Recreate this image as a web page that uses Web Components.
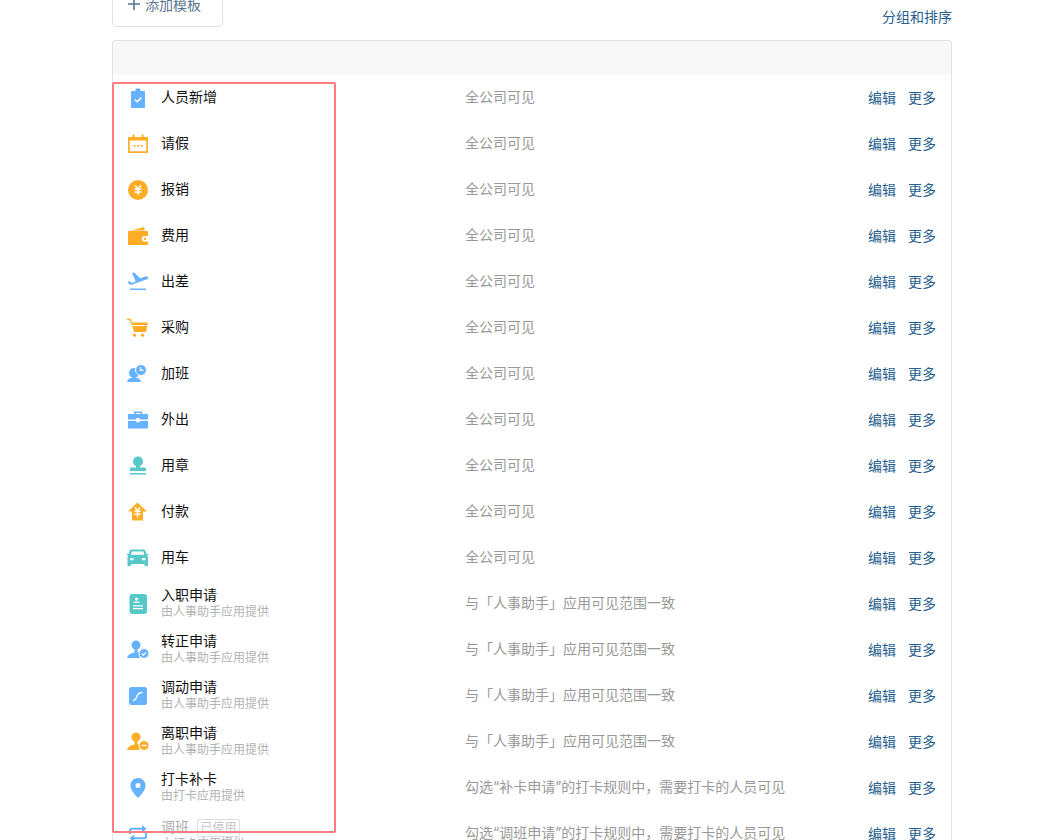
<!DOCTYPE html>
<html lang="zh">
<head>
<meta charset="utf-8">
<title>模板管理</title>
<style>
  html, body {
    margin: 0;
    height: 840px;
    overflow: hidden;
    background: #fff;
    font-family: Inter, "Noto Sans CJK SC", sans-serif;
    font-size: 14px;
  }
</style>
</head>
<body>
<template-page>
  <template-row name="人员新增" scope="全公司可见" icon="clipboard"></template-row>
  <template-row name="请假" scope="全公司可见" icon="calendar"></template-row>
  <template-row name="报销" scope="全公司可见" icon="coin"></template-row>
  <template-row name="费用" scope="全公司可见" icon="wallet"></template-row>
  <template-row name="出差" scope="全公司可见" icon="plane"></template-row>
  <template-row name="采购" scope="全公司可见" icon="cart"></template-row>
  <template-row name="加班" scope="全公司可见" icon="overtime"></template-row>
  <template-row name="外出" scope="全公司可见" icon="case"></template-row>
  <template-row name="用章" scope="全公司可见" icon="stamp"></template-row>
  <template-row name="付款" scope="全公司可见" icon="house"></template-row>
  <template-row name="用车" scope="全公司可见" icon="car"></template-row>
  <template-row name="入职申请" sub="由人事助手应用提供" scope="与「人事助手」应用可见范围一致" icon="idcard"></template-row>
  <template-row name="转正申请" sub="由人事助手应用提供" scope="与「人事助手」应用可见范围一致" icon="usercheck"></template-row>
  <template-row name="调动申请" sub="由人事助手应用提供" scope="与「人事助手」应用可见范围一致" icon="transfer"></template-row>
  <template-row name="离职申请" sub="由人事助手应用提供" scope="与「人事助手」应用可见范围一致" icon="userminus"></template-row>
  <template-row name="打卡补卡" sub="由打卡应用提供" scope="勾选“补卡申请”的打卡规则中，需要打卡的人员可见" icon="pin"></template-row>
  <template-row name="调班" sub="由打卡应用提供" scope="勾选“调班申请”的打卡规则中，需要打卡的人员可见" icon="swap" disabled></template-row>
</template-page>

<script>
  const ICONS = {
    clipboard: `<path fill="#66b2ff" d="M4 3h3.500V1.600C7.500 1 8 .5 8.600.5h2.800c.6 0 1.100.5 1.100 1.100V3H16c.6 0 1 .4 1 1v15c0 .6-.4 1-1 1H4c-.6 0-1-.4-1-1V4c0-.6.4-1 1-1z"/><path fill="none" stroke="#fff" stroke-width="1.500" d="M6.800 11.500l2.400 2.300 4.200-4.200"/>`,
    calendar: `<path fill="none" stroke="#ffad26" stroke-width="1.700" d="M.9 4h18.200v14.100H.9z"/><path fill="#ffad26" d="M0 3h20v3.500H0zM4.500 .5h2v3h-2zM13.500 .5h2v3h-2z"/><path fill="#ffad26" d="M5.500 11h2v1.800h-2zM9 11h2v1.800H9zM12.500 11h2v1.800h-2z"/>`,
    coin: `<circle cx="10" cy="10" r="10" fill="#ffad26"/><path fill="none" stroke="#fff" stroke-width="1.500" d="M7 5.500l3 3.200 3-3.200M6.500 9.200h7M6.500 12h7M10 8.800v6"/>`,
    wallet: `<path fill="#ffad26" d="M1 5L15.500 1.200c.6-.1 1 .2 1 .8v2.500H4z"/><path fill="#ffad26" d="M0 5h19c.6 0 1 .4 1 1v4h-3.500a2.800 2.800 0 0 0 0 5.600H20V18c0 .6-.4 1-1 1H0z"/><circle cx="17" cy="12.800" r="1.200" fill="#ffad26"/>`,
    plane: `<path fill="#66b2ff" d="M5 1l2.200-.6 6 5.800 5-1.600c1.500-.4 2.700 0 3 .8.200.8-.6 1.600-2 2L4.500 12.800C3 13.200 1.500 11.800.5 9.800l1.800-.6 2.400 1.500 4-1.300z"/><path fill="#66b2ff" d="M3 16.500h16V18H3z"/>`,
    cart: `<path fill="none" stroke="#ffad26" stroke-width="1.500" d="M0 1.500h3.200l1.300 3.500"/><path fill="#ffad26" d="M4.300 4.500H21l-.5 2.400H5zM5.300 7.900h15l-1.300 6.100H7z"/><circle cx="7.500" cy="17.200" r="1.600" fill="#ffad26"/><circle cx="15.500" cy="17.200" r="1.600" fill="#ffad26"/>`,
    overtime: `<circle cx="7" cy="9" r="5" fill="#66b2ff"/><path fill="#66b2ff" d="M5 12.500h4v1.200c2.500.4 4.500 1.300 5 4.300H0c.5-3 2.500-3.900 5-4.300z"/><circle cx="14" cy="6" r="5.500" fill="#66b2ff" stroke="#fff" stroke-width="1"/><path fill="none" stroke="#fff" stroke-width="1.200" d="M13.500 3v3.400h3"/>`,
    case: `<path fill="#66b2ff" d="M6 1.500h8.200v3h-1.600V3H7.600v1.500H6zM0 4h20v5.500H11.800V8H8.200v1.500H0zM0 11h8.200v1.200h3.600V11H20v7.500H0z"/>`,
    stamp: `<circle cx="10" cy="5.500" r="5" fill="#56c8c8"/><path fill="#56c8c8" d="M8 8h4v3.500h4.500c1 0 1.500.6 1.500 1.500v2H2v-2c0-.9.5-1.500 1.500-1.500H8z"/><path fill="#56c8c8" d="M2 17h16v1.500H2z"/>`,
    house: `<path fill="#ffad26" d="M9.500.5L19 9.500h-4V18.500H4V9.500H0z"/><path fill="none" stroke="#fff" stroke-width="1.400" d="M7 5.500l2.500 3 2.500-3M6.300 9.200h6.400M6.300 12h6.400M9.500 8.800v6.500"/>`,
    car: `<path fill="#56c8c8" d="M4.500 1.500h12c1 0 1.700.5 2 1.500l1 3h1.500v1.300H20c.7.800 1 1.700 1 2.700v8h-3.500v-2H4v2H.5v-8c0-1 .3-1.900 1-2.700H0V6h1.500l1-3c.3-1 1-1.500 2-1.500z"/><path fill="#fff" d="M4.800 3.500h11.600l.9 3.200H3.900zM3 10h3.500v2.200H3zM15 10h3.500v2.200H15z"/>`,
    idcard: `<rect x="1.500" y="0" width="17.500" height="20" rx="3" fill="#56c8c8"/><circle cx="8.500" cy="5" r="1.500" fill="#fff"/><path fill="#fff" d="M5.500 7.500h6v1.200h-6zM5 11.200h10v1.200H5zM5 14h10v1.200H5z"/>`,
    usercheck: `<circle cx="9" cy="5" r="4.500" fill="#66b2ff"/><path fill="#66b2ff" d="M7.500 9h3v3l2 .8V18H0c.5-3 3-4.500 7.500-5.500z"/><circle cx="17" cy="13.500" r="5" fill="#66b2ff" stroke="#fff"/><path fill="none" stroke="#fff" stroke-width="1.200" d="M14.800 13.500l1.700 1.600 2.700-2.700"/>`,
    userminus: `<circle cx="9" cy="5" r="4.500" fill="#ffad26"/><path fill="#ffad26" d="M7.500 9h3v3l2 .8V18H0c.5-3 3-4.500 7.500-5.500z"/><circle cx="17" cy="13.500" r="5" fill="#ffad26" stroke="#fff"/><path fill="#fff" d="M14.500 12.800h5v1.400h-5z"/>`,
    transfer: `<rect x="1" y="1" width="18" height="18" rx="2.500" fill="#66b2ff"/><path fill="none" stroke="#fff" stroke-width="1.300" d="M5 14.500c2.500 0 3-1.800 4-4.500.8-2 2-3.500 5.500-3.500"/>`,
    pin: `<path fill="#66b2ff" fill-rule="evenodd" d="M10 0c4.300 0 7.500 3.200 7.500 7.500C17.500 12 13 17 10 20 7 17 2.500 12 2.500 7.500 2.500 3.200 5.700 0 10 0zm0 5a2.500 2.500 0 1 0 0 5 2.500 2.500 0 0 0 0-5z"/>`,
    swap: `<path fill="none" stroke="#66b2ff" stroke-width="2" d="M2 10V6.500c0-1 .8-1.800 1.800-1.800H16M18 9v3.500c0 1-.8 1.800-1.800 1.800H4"/><path fill="#66b2ff" d="M14 1l4.500 3.700L14 8.400zM6 10.600v7.400L1.500 14.300z"/>`
  };

  class AppIcon extends HTMLElement {
    constructor() {
      super();
      this.attachShadow({ mode: "open" });
    }

    connectedCallback() {
      const name = this.getAttribute("name");
      const wide = ["plane", "cart", "car", "overtime", "usercheck", "userminus"].includes(name);
      this.shadowRoot.innerHTML = `
        <style>
          :host { display: block; width: 22px; height: 20px; }
          svg { display: block; width: 100%; height: 100%; overflow: visible; }
        </style>
        <svg viewBox="${wide ? "0 0 22 20" : "-1 0 22 20"}">${ICONS[name] || ""}</svg>
      `;
    }
  }

  class TemplateRow extends HTMLElement {
    constructor() {
      super();
      this.attachShadow({ mode: "open" });
    }

    connectedCallback() {
      const name = this.getAttribute("name");
      const sub = this.getAttribute("sub");
      const scope = this.getAttribute("scope");
      const icon = this.getAttribute("icon");
      const disabled = this.hasAttribute("disabled");

      this.shadowRoot.innerHTML = `
        <style>
          :host {
            display: grid;
            grid-template-columns: 338px 1fr auto;
            align-items: center;
            height: 46px;
            padding: 0 15px 0 14px;
            font-size: 14px;
          }
          .name-cell { display: flex; align-items: center; gap: 12px; }
          .text { padding-bottom: 2px; }
          .text.two-line { padding-bottom: 1px; }
          :host([disabled]) .text { padding: 2px 0 0; }
          .title { display: flex; align-items: flex-start; gap: 8px; line-height: 16px; color: #111; }
          :host([disabled]) .title { color: #aaa; }
          .sub { margin-top: 1px; font-size: 12px; line-height: 16px; color: #b3b3b3; }
          .tag {
            font-size: 12px;
            line-height: 16px;
            margin-bottom: -2px;
            padding: 0 2.5px;
            border: 1px solid #ddd;
            border-radius: 2px;
            color: #c4c4c4;
          }
          .scope { color: #999; padding-bottom: 5px; }
          .actions { display: flex; gap: 12px; color: #27608f; padding-bottom: 3px; }
        </style>
        <div class="name-cell">
          <app-icon name="${icon}"></app-icon>
          <div class="text ${sub ? "two-line" : ""}">
            <div class="title">${name}${disabled ? '<span class="tag">已停用</span>' : ""}</div>
            ${sub ? `<div class="sub">${sub}</div>` : ""}
          </div>
        </div>
        <div class="scope">${scope}</div>
        <div class="actions"><span>编辑</span><span>更多</span></div>
      `;
    }
  }

  class TemplatePage extends HTMLElement {
    constructor() {
      super();
      this.attachShadow({ mode: "open" });
      this.shadowRoot.innerHTML = `
        <style>
          :host {
            display: block;
            position: relative;
            width: 840px;
            margin: -18px 0 0 112px;
            font-size: 14px;
          }
          .toolbar {
            display: flex;
            justify-content: space-between;
            align-items: flex-end;
            margin-bottom: 13px;
          }
          .add {
            display: flex;
            align-items: center;
            gap: 5px;
            box-sizing: border-box;
            width: 111px;
            height: 45px;
            padding: 0 0 2px 15px;
            border: 1px solid #e3e3e3;
            border-radius: 4px;
            color: #5a7690;
          }
          .add svg { width: 12px; height: 12px; }
          .sort { color: #27608f; line-height: 18px; margin-bottom: 1px; }
          .table {
            border: 1px solid #e3e3e3;
            border-bottom: 0;
            border-radius: 4px 4px 0 0;
          }
          .head { height: 34px; background: #f8f8f8; border-radius: 4px 4px 0 0; }
          .marker {
            position: absolute;
            left: 0;
            top: 100px;
            width: 224px;
            height: 751px;
            box-sizing: border-box;
            border: 2px solid #ff7b80;
            border-radius: 2px;
            pointer-events: none;
          }
        </style>
        <div class="toolbar">
          <div class="add">
            <svg viewBox="0 0 12 12"><path d="M5.200 0h1.600v5.200H12v1.600H6.800V12H5.200V6.800H0V5.200h5.200z" fill="#5a7690"/></svg>
            添加模板
          </div>
          <div class="sort">分组和排序</div>
        </div>
        <div class="table">
          <div class="head"></div>
          <slot></slot>
        </div>
        <div class="marker"></div>
      `;
    }
  }

  customElements.define("app-icon", AppIcon);
  customElements.define("template-row", TemplateRow);
  customElements.define("template-page", TemplatePage);
</script>
</body>
</html>
